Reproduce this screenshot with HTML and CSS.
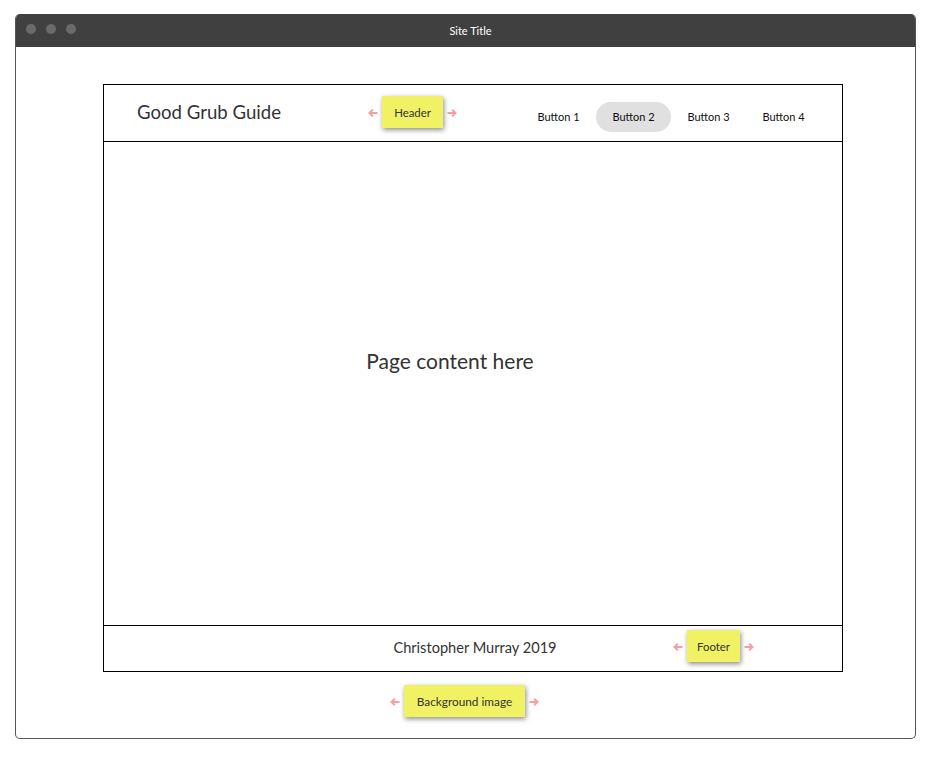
FILE: index.html
```html
<!DOCTYPE html>
<html>
<head>
<meta charset="utf-8">
<title>Site Title</title>
<link rel="stylesheet" href="styles.css">
</head>
<body>
<div class="window">
  <div class="titlebar">
    <div class="dots"><span class="dot"></span><span class="dot"></span><span class="dot"></span></div>
    <div class="wtitle">Site Title</div>
  </div>
  <div class="canvas">
    <div class="site">
      <header class="site-header">
        <div class="brand">Good Grub Guide</div>
        <nav class="nav">
          <span class="btn">Button 1</span>
          <span class="btn active">Button 2</span>
          <span class="btn">Button 3</span>
          <span class="btn">Button 4</span>
        </nav>
        <div class="note-wrap note-header">
          <svg class="arr" viewBox="0 0 10 10"><path d="M9.5 5H1.5M4.8 1.8L1.5 5L4.8 8.2"/></svg>
          <div class="note n-header">Header</div>
          <svg class="arr" viewBox="0 0 10 10"><path d="M0.5 5H8.5M5.2 1.8L8.5 5L5.2 8.2"/></svg>
        </div>
      </header>
      <main class="content"><span class="content-text">Page content here</span></main>
      <footer class="site-footer">
        <span class="credit">Christopher Murray 2019</span>
        <div class="note-wrap note-footer">
          <svg class="arr" viewBox="0 0 10 10"><path d="M9.5 5H1.5M4.8 1.8L1.5 5L4.8 8.2"/></svg>
          <div class="note n-footer">Footer</div>
          <svg class="arr" viewBox="0 0 10 10"><path d="M0.5 5H8.5M5.2 1.8L8.5 5L5.2 8.2"/></svg>
        </div>
      </footer>
    </div>
    <div class="bg-note">
      <div class="note-wrap">
        <svg class="arr" viewBox="0 0 10 10"><path d="M9.5 5H1.5M4.8 1.8L1.5 5L4.8 8.2"/></svg>
        <div class="note n-bg">Background image</div>
        <svg class="arr" viewBox="0 0 10 10"><path d="M0.5 5H8.5M5.2 1.8L8.5 5L5.2 8.2"/></svg>
      </div>
    </div>
  </div>
</div>
</body>
</html>
```
FILE: styles.css
```css
* { box-sizing: border-box; }
html, body { margin: 0; padding: 0; background: #fff; }
body {
  font-family: Lato, "Open Sans", "Liberation Sans", sans-serif;
  color: #333;
  padding: 14px 0 0 15px;
}
.window {
  width: 901px;
  height: 725px;
  border: 1px solid #555;
  border-top: none;
  border-radius: 5px;
  overflow: hidden;
  display: flex;
  flex-direction: column;
}
.titlebar {
  height: 33px;
  background: #404040;
  position: relative;
  display: flex;
  align-items: center;
  justify-content: center;
  flex: none;
}
.dots {
  position: absolute;
  left: 10px;
  top: 10px;
  display: flex;
  gap: 10px;
}
.dot {
  width: 10px;
  height: 10px;
  border-radius: 50%;
  background: #6a6a6a;
}
.wtitle {
  color: #fff;
  font-size: 11px;
  margin-left: 10px;
}
.canvas {
  flex: 1;
  padding: 37px 0 0 87px;
}
.site {
  width: 740px;
  border: 1px solid #000;
}
.site-header {
  height: 57px;
  border-bottom: 1px solid #000;
  display: flex;
  align-items: center;
  justify-content: space-between;
  padding: 0 21px 0 33px;
  position: relative;
}
.brand {
  font-size: 18.6px;
  color: #333;
  margin-top: -2px;
}
.nav {
  display: flex;
  margin-top: 7px;
}
.btn {
  width: 75px;
  height: 30px;
  border-radius: 15px;
  display: flex;
  align-items: center;
  justify-content: center;
  font-size: 11px;
  color: #111;
}
.btn.active { background: #e0e0e0; }
.content {
  height: 484px;
  border-bottom: 1px solid #000;
  display: flex;
  align-items: center;
  justify-content: center;
  padding: 0 46px 46px 0;
}
.content-text {
  font-size: 21px;
  color: #333;
}
.site-footer {
  height: 45px;
  display: flex;
  align-items: center;
  justify-content: center;
  position: relative;
  font-size: 14.6px;
}
.credit { margin-left: 4px; margin-top: -2px; }
.note-wrap {
  display: flex;
  align-items: center;
  gap: 4px;
}
.note-header { position: absolute; left: 264px; top: 11px; }
.note-footer { position: absolute; left: 569px; top: 4px; }
.note {
  background: #f1f164;
  height: 32px;
  display: flex;
  align-items: center;
  justify-content: center;
  font-size: 11.4px;
  color: #333;
  box-shadow: 1px 2px 5px rgba(0,0,0,0.45);
}
.n-header { width: 61px; }
.n-footer { width: 53px; }
.n-bg { width: 121px; font-size: 11.8px; }
.arr {
  width: 10px;
  height: 10px;
  fill: none;
  stroke: #f3a0a0;
  stroke-width: 2;
  margin-top: 2px;
}
.bg-note {
  display: flex;
  padding: 13px 0 0 287px;
}
```
